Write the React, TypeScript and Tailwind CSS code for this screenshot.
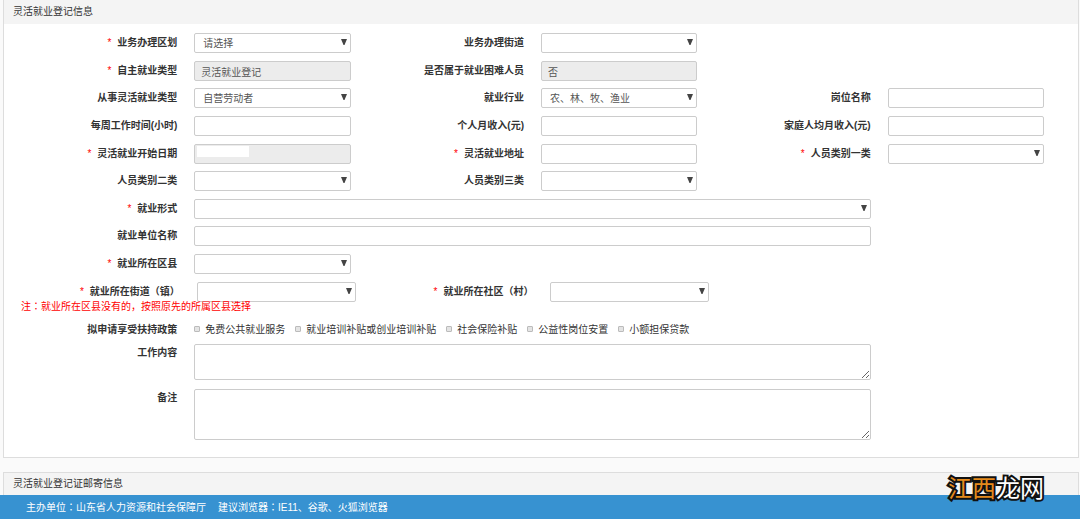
import type { ReactNode } from "react";
import clsx from "clsx";

const box =
  "block w-full rounded-xs border border-[#ccc] bg-white text-[10px] text-[#555] outline-none";

type FieldProps = {
  id: string;
  label: string;
  required?: boolean;
  layout?: "normal" | "wide" | "village";
  top?: boolean;
  children: ReactNode;
};

function Field({ id, label, required, layout = "normal", top, children }: FieldProps) {
  return (
    <div
      className={clsx(
        "flex",
        top ? "items-start" : "items-center",
        layout === "normal" && "w-1/3",
        layout === "wide" && "w-5/6",
        layout === "village" && "w-[34%] pr-0.5"
      )}
    >
      <label
        htmlFor={id}
        className={clsx(
          "shrink-0 whitespace-nowrap text-right font-bold",
          top ? "leading-[18px]" : "leading-5",
          layout === "normal" && "w-1/2",
          layout === "wide" && "w-1/5",
          layout === "village" && "w-1/2"
        )}
      >
        {required && <span className="mr-1.5 font-normal text-[#f00]">*</span>}
        {label}
      </label>
      <div className="ml-[17px] min-w-0 flex-1">{children}</div>
    </div>
  );
}

function Select({ id, value }: { id: string; value?: string }) {
  return (
    <div className="relative">
      <select id={id} className={clsx(box, "h-5 appearance-none pl-2 pr-5 pt-0.5 leading-4")}>
        <option>{value ?? ""}</option>
      </select>
      <svg
        viewBox="0 0 6 6"
        className="pointer-events-none absolute right-1 top-1.5 size-1.5 fill-[#444]"
      >
        <path d="M0 0h6L3.5 6h-1z" />
      </svg>
    </div>
  );
}

function TextInput({ id, value, readOnly }: { id: string; value?: string; readOnly?: boolean }) {
  return (
    <input
      id={id}
      type="text"
      defaultValue={value}
      readOnly={readOnly}
      className={clsx(box, "h-5 px-1.5 leading-4", readOnly && "bg-[#ececec]!")}
    />
  );
}

// full-width colon centred in its cell
function Colon() {
  return <span className="font-['Noto_Sans_CJK_TC',sans-serif]">：</span>;
}

const policies = [
  "免费公共就业服务",
  "就业培训补贴或创业培训补贴",
  "社会保险补贴",
  "公益性岗位安置",
  "小额担保贷款",
];

export default function App() {
  return (
    <div className="bg-[#fafafa] font-['Liberation_Sans','Noto_Sans_CJK_SC',sans-serif] text-[10px] text-[#333]">
      <main className="pl-[3px] pr-px">
        <section className="border border-t-0 border-[#ddd] bg-white">
          <h2 className="h-6 bg-[#f4f4f4] pl-[9px] leading-6">灵活就业登记信息</h2>
          <form className="pb-[17px] pr-[34px] pt-[9px]">
            <div className="flex flex-col gap-[7px]">
              <div className="flex flex-col gap-2">
                <div className="flex h-5">
                  <Field id="area" label="业务办理区划" required>
                    <Select id="area" value="请选择" />
                  </Field>
                  <Field id="street" label="业务办理街道">
                    <Select id="street" />
                  </Field>
                </div>
                <div className="flex h-5">
                  <Field id="type" label="自主就业类型" required>
                    <TextInput id="type" value="灵活就业登记" readOnly />
                  </Field>
                  <Field id="hard" label="是否属于就业困难人员">
                    <TextInput id="hard" value="否" readOnly />
                  </Field>
                </div>
              </div>

              <div className="flex flex-col gap-2">
                <div className="flex h-5">
                  <Field id="flexType" label="从事灵活就业类型">
                    <Select id="flexType" value="自营劳动者" />
                  </Field>
                  <Field id="industry" label="就业行业">
                    <Select id="industry" value="农、林、牧、渔业" />
                  </Field>
                  <Field id="post" label="岗位名称">
                    <TextInput id="post" />
                  </Field>
                </div>
                <div className="flex h-5">
                  <Field id="hours" label="每周工作时间(小时)">
                    <TextInput id="hours" />
                  </Field>
                  <Field id="income" label="个人月收入(元)">
                    <TextInput id="income" />
                  </Field>
                  <Field id="family" label="家庭人均月收入(元)">
                    <TextInput id="family" />
                  </Field>
                </div>
                <div className="flex h-5">
                  <Field id="start" label="灵活就业开始日期" required>
                    <div className="relative">
                      <TextInput id="start" readOnly />
                      <span className="absolute left-[3px] top-0.5 h-[11px] w-[52px] bg-white" />
                    </div>
                  </Field>
                  <Field id="address" label="灵活就业地址" required>
                    <TextInput id="address" />
                  </Field>
                  <Field id="class1" label="人员类别一类" required>
                    <Select id="class1" />
                  </Field>
                </div>
              </div>

              <div className="flex flex-col gap-2">
                <div className="flex h-5">
                  <Field id="class2" label="人员类别二类">
                    <Select id="class2" />
                  </Field>
                  <Field id="class3" label="人员类别三类">
                    <Select id="class3" />
                  </Field>
                </div>
                <div className="flex h-5">
                  <Field id="form" label="就业形式" required layout="wide">
                    <Select id="form" />
                  </Field>
                </div>
              </div>

              <div className="flex flex-col gap-2">
                <div className="flex h-5">
                  <Field id="company" label="就业单位名称" layout="wide">
                    <TextInput id="company" />
                  </Field>
                </div>
                <div className="flex h-5">
                  <Field id="county" label="就业所在区县" required>
                    <Select id="county" />
                  </Field>
                </div>
                <div className="flex h-5">
                  <Field id="town" label="就业所在街道（镇）" required layout="village">
                    <Select id="town" />
                  </Field>
                  <Field id="village" label="就业所在社区（村）" required layout="village">
                    <Select id="village" />
                  </Field>
                </div>
              </div>
            </div>

            <p className="relative pl-[17px] leading-[7px] text-[#f00]">
              注<Colon />
              就业所在区县没有的，按照原先的所属区县选择
            </p>

            <div role="group" aria-labelledby="policy" className="mt-[9px] flex h-5 items-center">
              <span id="policy" className="w-1/6 shrink-0 text-right font-bold">
                拟申请享受扶持政策
              </span>
              <div className="ml-[17px] flex gap-2.5 whitespace-nowrap">
                {policies.map((name) => (
                  <label key={name} className="flex items-center gap-[5px]">
                    <input
                      type="checkbox"
                      className="size-1.5 appearance-none rounded-[1px] border border-[#bbb] bg-[#e4e4e4] checked:bg-[#3792d1]"
                    />
                    {name}
                  </label>
                ))}
              </div>
            </div>

            <div className="mt-[5px] flex flex-col gap-[9px]">
              <Field id="content" label="工作内容" layout="wide" top>
                <textarea id="content" className={clsx(box, "h-9 px-1.5")} />
              </Field>
              <Field id="remark" label="备注" layout="wide" top>
                <textarea id="remark" className={clsx(box, "h-[51px] px-1.5")} />
              </Field>
            </div>
          </form>
        </section>

        <section className="mt-3.5 border border-b-0 border-[#ddd]">
          <h2 className="h-[22px] bg-[#f4f4f4] pl-[9px] leading-[22px]">灵活就业登记证邮寄信息</h2>
        </section>
      </main>

      <footer className="relative flex h-6 items-center gap-3 bg-[#3792d1] pl-[26px] text-white">
        <span className="leading-4">
          主办单位
          <Colon />
          山东省人力资源和社会保障厅
        </span>
        <span className="leading-4">
          建议浏览器
          <Colon />
          IE11、谷歌、火狐浏览器
        </span>
        <div className="absolute bottom-4 right-9 text-2xl font-normal leading-7 text-white [-webkit-text-stroke:4px_#111] [paint-order:stroke_fill]">
          <span className="text-[#e58a1c]">江西</span>龙网
        </div>
      </footer>
    </div>
  );
}
